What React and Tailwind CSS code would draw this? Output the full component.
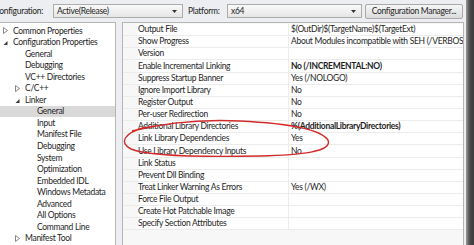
import React from "react";

const font = { fontFamily: 'Lato, "Open Sans", sans-serif' };

const treeRows = [
  { t: "Common Properties", i: 0, tri: "closed" },
  { t: "Configuration Properties", i: 0, tri: "open" },
  { t: "General", i: 1 },
  { t: "Debugging", i: 1 },
  { t: "VC++ Directories", i: 1 },
  { t: "C/C++", i: 1, tri: "closed" },
  { t: "Linker", i: 1, tri: "open" },
  { t: "General", i: 2, sel: true },
  { t: "Input", i: 2 },
  { t: "Manifest File", i: 2 },
  { t: "Debugging", i: 2 },
  { t: "System", i: 2 },
  { t: "Optimization", i: 2 },
  { t: "Embedded IDL", i: 2 },
  { t: "Windows Metadata", i: 2 },
  { t: "Advanced", i: 2 },
  { t: "All Options", i: 2 },
  { t: "Command Line", i: 2 },
  { t: "Manifest Tool", i: 1, tri: "closed" },
];

const props = [
  ["Output File", "$(OutDir)$(TargetName)$(TargetExt)"],
  ["Show Progress", "About Modules incompatible with SEH (/VERBOSE:SAFESEH)"],
  ["Version", ""],
  ["Enable Incremental Linking", "No (/INCREMENTAL:NO)", true],
  ["Suppress Startup Banner", "Yes (/NOLOGO)"],
  ["Ignore Import Library", "No"],
  ["Register Output", "No"],
  ["Per-user Redirection", "No"],
  ["Additional Library Directories", "%(AdditionalLibraryDirectories)", true],
  ["Link Library Dependencies", "Yes"],
  ["Use Library Dependency Inputs", "No"],
  ["Link Status", ""],
  ["Prevent Dll Binding", ""],
  ["Treat Linker Warning As Errors", "Yes (/WX)"],
  ["Force File Output", ""],
  ["Create Hot Patchable Image", ""],
  ["Specify Section Attributes", ""],
];

function Tri({ kind }) {
  if (kind === "closed")
    return (
      <svg width="5" height="7" viewBox="0 0 5 7" className="shrink-0">
        <path d="M0.5 0.5 L4.5 3.5 L0.5 6.5 Z" fill="none" stroke="#7a7a7a" strokeWidth="0.9" />
      </svg>
    );
  return (
    <svg width="5" height="7" viewBox="0 0 5 7" className="shrink-0">
      <path d="M0.5 6 L4.5 6 L4.5 2 Z" fill="#3a3a3a" />
    </svg>
  );
}

function Combo({ text, w }) {
  return (
    <div
      className="h-[14px] border border-[#acacac] bg-gradient-to-b from-[#f9f9f9] to-[#e6e6e6] flex items-center justify-between pl-[3px] pr-[5px] text-[#1e1e1e] shrink-0"
      style={{ width: w }}
    >
      <span>{text}</span>
      <svg width="5" height="3" viewBox="0 0 5 3">
        <path d="M0 0 L5 0 L2.5 3 Z" fill="#333" />
      </svg>
    </div>
  );
}

export default function App() {
  return (
    <div
      className="w-[474px] h-[245px] overflow-hidden flex bg-[#eceef1] relative text-[#1e1e1e] text-[8.5px] tracking-[-0.3px]"
      style={font}
    >
      <div className="flex-1 flex flex-col min-w-0">
        {/* top bar */}
        <div className="h-[22px] flex items-center shrink-0 whitespace-nowrap">
          <span className="-ml-[6px] w-[59px] shrink-0">Configuration:</span>
          <Combo text="Active(Release)" w="130px" />
          <span className="ml-[5px] w-[39px] shrink-0">Platform:</span>
          <Combo text="x64" w="135px" />
          <div className="ml-[3px] w-[98px] h-[15px] border border-[#a9a9a9] rounded-[2px] bg-gradient-to-b from-[#f6f6f6] to-[#dcdcdc] flex items-center justify-center shrink-0">
            Configuration Manager...
          </div>
        </div>
        {/* content */}
        <div className="flex-1 flex gap-[6px] min-h-0">
          {/* tree */}
          <div className="w-[116px] bg-white border-r border-t border-[#b5b5b5] pt-[2px] shrink-0">
            {treeRows.map((r, k) => (
              <div
                key={k}
                className={`h-[11.56px] flex items-center ${r.sel ? "bg-[#d9d9d9]" : ""}`}
                style={{ paddingLeft: 3 + 12 * r.i }}
              >
                <div className="w-[10px] flex items-center">{r.tri && <Tri kind={r.tri} />}</div>
                <span className="whitespace-nowrap leading-none">{r.t}</span>
              </div>
            ))}
          </div>
          {/* grid */}
          <div className="w-[342px] bg-[#f7f7f7] border-l border-t border-r border-[#b5b5b5] pt-[1px] shrink-0 flex flex-col">
            {props.map(([n, v, b], k) => (
              <div key={k} className="h-[12.15px] flex border-b border-[#ececec] bg-white">
                <div className="w-[15px] bg-[#f7f7f7] shrink-0" />
                <div className="w-[151px] border-r border-[#ececec] flex items-center whitespace-nowrap overflow-hidden shrink-0">
                  {n}
                </div>
                <div
                  className={`flex-1 pl-[2px] flex items-center whitespace-nowrap overflow-hidden ${b ? "font-bold" : ""}`}
                >
                  {v}
                </div>
              </div>
            ))}
          </div>
        </div>
      </div>
      <div className="w-[8px] bg-gradient-to-r from-[#9a9a9a] via-[#4a4a4a] to-[#3a3a3a] shrink-0" />
      {/* red annotation */}
      <svg className="absolute left-0 top-0 pointer-events-none" width="474" height="245">
        <path
          d="M132 131 C160 124 200 119 240 121 C280 123 320 128 328 140 C333 152 300 155 260 156 C210 157 150 157 131 149 C119 143 123 133 146 127"
          fill="none"
          stroke="#d22a2a"
          strokeWidth="1.4"
        />
      </svg>
    </div>
  );
}
